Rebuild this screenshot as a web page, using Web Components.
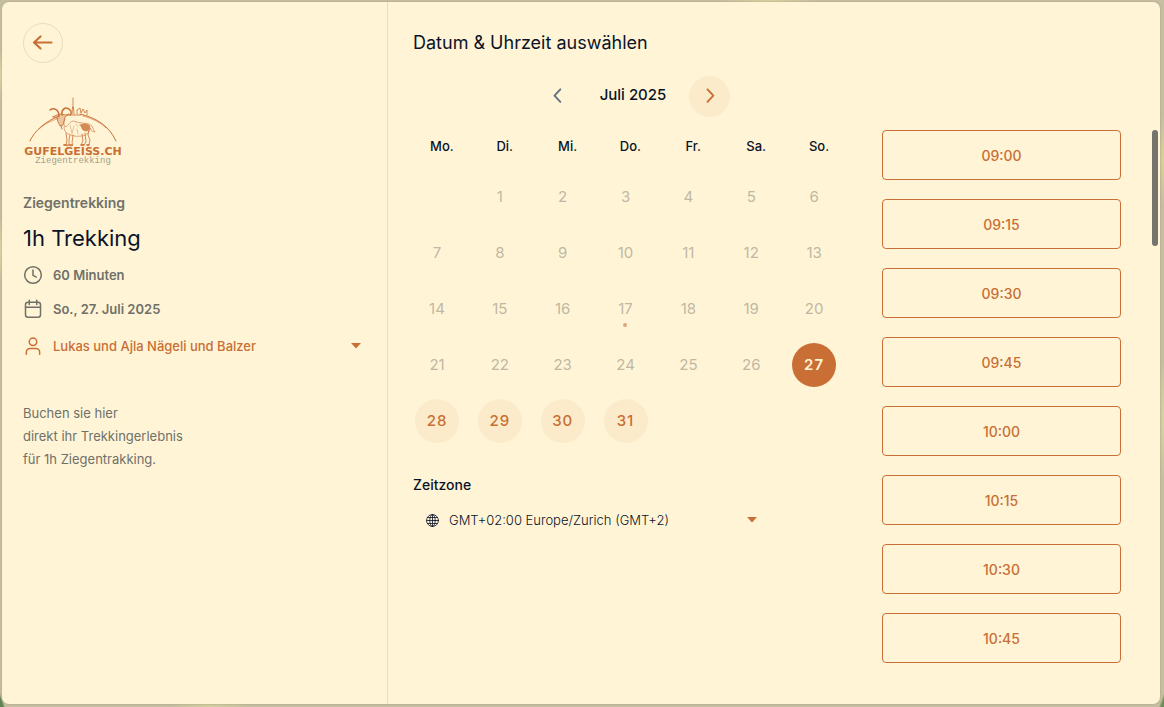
<!DOCTYPE html>
<html lang="de">
<head>
<meta charset="utf-8">
<meta name="viewport" content="width=device-width, initial-scale=1">
<title>1h Trekking</title>
<style>
	:root {
		--paper: #fff5d6;
		--accent: #c96f35;
		--tint: #fbebca;
		--ink: #0b1328;
		--muted: #707069;
		--line: #e6dcc1;
	}
	* { box-sizing: border-box; }
	body {
		margin: 0;
		min-height: 100vh;
		padding: 2px 4px 3px 2px;
		display: flex;
		font-family: Inter, "Liberation Sans", sans-serif;
		font-size: 14px;
		color: var(--ink);
		background:
			linear-gradient(70deg, #5f8350 3px, transparent 5px) 0 100% / 8px 14px no-repeat,
			linear-gradient(290deg, #6e8f5b 3px, transparent 5px) 100% 100% / 8px 22px no-repeat,
			radial-gradient(ellipse 6px 26px at 0 75px, #dcd8a0, transparent),
			radial-gradient(ellipse 6px 34px at 0 250px, #dcd8a0, transparent),
			radial-gradient(ellipse 6px 44px at 100% 160px, #d8d49a, transparent),
			radial-gradient(ellipse 6px 60px at 100% 420px, #dad6a0, transparent),
			radial-gradient(ellipse 40px 6px at 18% 100%, #d5d1a0, transparent),
			radial-gradient(ellipse 50px 6px at 66% 0, #d8d49e, transparent),
			#c6bea1;
	}
</style>
</head>
<body>
<booking-card>
	<booking-summary slot="summary" category="Ziegentrekking" heading="1h Trekking">
		<meta-line icon="clock">60 Minuten</meta-line>
		<meta-line icon="calendar">So., 27. Juli 2025</meta-line>
		<staff-select></staff-select>
		<span slot="description">Buchen sie hier<br>direkt ihr Trekkingerlebnis<br>für 1h Ziegentrakking.</span>
	</booking-summary>
	<span slot="title">Datum &amp; Uhrzeit auswählen</span>
	<month-calendar slot="calendar" label="Juli 2025" offset="1" days="31" today="17" selected="27"></month-calendar>
	<zone-select slot="calendar"></zone-select>
	<time-slots slot="times" start="09:00" count="8" step="15"></time-slots>
</booking-card>

<script>
const ICONS = {
	back: '<path d="M20.5 11.500H3.5M9.5 5.5 3 11.500l6.5 6" stroke-width="2.200"/>',
	prev: '<path d="m16 4-7 7.500 7 7.500" stroke-width="2.300"/>',
	next: '<path d="m9 4 7 7.500-7 7.500" stroke-width="2.300"/>',
	clock: '<circle cx="12" cy="12" r="10"/><path d="M12 6v6.5l4 2"/>',
	calendar: '<rect x="3" y="4" width="18" height="18" rx="3"/><path d="M3 10h18M7.5 1.5v5M16.5 1.5v5"/>',
	user: '<circle cx="12" cy="7" r="4.5"/><path d="M4 22v-2.500a4.500 4.500 0 0 1 4.500-4.500h7a4.500 4.500 0 0 1 4.500 4.500V22"/>',
	globe: '<g stroke-width="1.500"><circle cx="12" cy="12" r="11"/><ellipse cx="12" cy="12" rx="5" ry="11"/><path d="M12 1v22M1 12h22M3 6.500h18M3 17.500h18"/></g>',
	caret: '<path d="M2 6h20L12 17z" fill="currentColor" stroke="none"/>'
};

class UiIcon extends HTMLElement {
	connectedCallback() {
		this.attachShadow({ mode: 'open' });
		this.shadowRoot.innerHTML = `
			<style>
				:host { display: inline-flex; flex: none; width: 20px; height: 20px; }
				svg { width: 100%; height: 100%; }
			</style>
			<svg viewBox="0 0 24 24" fill="none" stroke="currentColor" stroke-width="1.8"
				stroke-linecap="round" stroke-linejoin="round" aria-hidden="true">${ICONS[this.getAttribute('name')]}</svg>
		`;
	}
}

class BookingCard extends HTMLElement {
	constructor() {
		super();
		this.attachShadow({ mode: 'open' });
		this.shadowRoot.innerHTML = `
			<style>
				* { box-sizing: border-box; }
				:host {
					flex: 1;
					display: grid;
					grid-template-columns: 1fr 2fr;
					background: var(--paper);
					border-radius: 7px;
					box-shadow: 0 0 1px 1px rgba(150, 140, 110, .2);
				}
				aside { border-right: 1px solid var(--line); padding: 21px; }
				main { padding: 28px 2px 0 25px; }
				h1 { margin: 0 0 20px; font-size: 18px; line-height: 26px; font-weight: 400; }
				.columns { display: flex; }
				.left { flex: 440 1 0; margin-right: 29px; }
				.right { flex: 276 1 0; padding-top: 54px; }
			</style>
			<aside><slot name="summary"></slot></aside>
			<main>
				<h1><slot name="title"></slot></h1>
				<div class="columns">
					<div class="left"><slot name="calendar"></slot></div>
					<div class="right"><slot name="times"></slot></div>
				</div>
			</main>
		`;
	}
}

class BrandLogo extends HTMLElement {
	constructor() {
		super();
		this.attachShadow({ mode: 'open' });
		this.shadowRoot.innerHTML = `
			<style>
				:host { display: block; width: 100px; height: 70px; color: var(--accent); }
				svg { display: block; overflow: visible; }
				.name { font: 700 11px "DejaVu Sans", sans-serif; }
				.sub { font: 9px "Liberation Mono", monospace; fill: #a59f8c; }
			</style>
			<svg width="100" height="70" viewBox="0 0 100 70" fill="none" stroke="currentColor" stroke-linecap="round" stroke-linejoin="round">
				<!-- hill line -->
				<path d="M7 44C11 34 23 24 36 19M57 17c17 4 29 12 36 27" stroke-width="1"/>
				<path d="M16 32c5-5 12-8 20-11M60 19c11 3 18 7 23 12" stroke-width=".6"/>
				<!-- tower and village -->
				<path d="M50 1v10M49 17l.5-7h1l.5 7M44 18h14M54 17v-4l3-2 1 5 2-4 2 4 2-3v5" stroke-width=".8"/>
				<g transform="translate(0 -1)">
					<!-- horns and head -->
					<path d="M36 20c0-6-5-9-9-6M39 19c-1-6 4-9 8-5 2 2 1 4 0 5" stroke-width="1.500"/>
					<path d="M34 19l4-1 5 1 3-1-4 3-2 8-3 1-2-4-1-4-4-1z" fill="currentColor" fill-opacity=".35" stroke-width=".8"/>
					<path d="M38 30l1 3" stroke-width="1"/>
					<!-- body and legs -->
					<path d="M42 23c-1 3-2 6 1 8 4-4 4-5 7-6 6 2 10 2 16 3 4 1 3 4 6 8l-3-1-2-3c0 5-5 8-9 8-7 1-9-1-13-2-3-2-4-4-4-8" stroke-width=".6"/>
					<path d="M57 29c4-2 8-1 10 1 0 5-4 6-7 4-2-2-1-4-3-5z" fill="currentColor" fill-opacity=".8" stroke-width=".5"/>
					<path d="M43 37l1 7-1 5h-2M47 39l-1 5v5l-2 1M50 39l-1 8 1 2-2 1M59 38l1 7-2 4M62 37l1 9-2 3h-2M66 34l-1 5 2 5-1 5h-2" stroke-width=".8"/>
					<path d="M47 29l2 8M51 30l-2 7M54 33l1 5M53 28l2 3" stroke-width=".4"/>
					<path d="M41 49h3M46 49h3M58 49h3M64 49h2" stroke-width="1.400"/>
				</g>
				<g fill="currentColor" stroke="none">
					<text class="name" x="50" y="58" text-anchor="middle">GUFELGEISS.CH</text>
					<text class="sub" x="50" y="66" text-anchor="middle">Ziegentrekking</text>
				</g>
			</svg>
		`;
	}
}

class BookingSummary extends HTMLElement {
	connectedCallback() {
		this.attachShadow({ mode: 'open' });
		this.shadowRoot.innerHTML = `
			<style>
				:host { display: block; }
				button {
					display: flex;
					align-items: center;
					justify-content: center;
					width: 40px;
					height: 40px;
					padding: 0;
					border: 1px solid var(--line);
					border-radius: 50%;
					background: none;
					color: var(--accent);
				}
				button ui-icon { width: 24px; height: 24px; }
				brand-logo { margin-top: 34px; }
				.category { margin: 26px 0 0; line-height: 20px; font-weight: 600; color: var(--muted); }
				h2 { margin: 9px 0 11px; font-size: 22px; line-height: 32px; font-weight: 400; }
				.meta { display: grid; gap: 14px; }
				.description { margin: 43px 0 0; font-size: 13px; line-height: 23px; color: var(--muted); }
			</style>
			<button type="button" aria-label="Zurück"><ui-icon name="back"></ui-icon></button>
			<brand-logo></brand-logo>
			<p class="category">${this.getAttribute('category')}</p>
			<h2>${this.getAttribute('heading')}</h2>
			<div class="meta"><slot></slot></div>
			<p class="description"><slot name="description"></slot></p>
		`;
	}
}

class MetaLine extends HTMLElement {
	connectedCallback() {
		this.attachShadow({ mode: 'open' });
		this.shadowRoot.innerHTML = `
			<style>
				:host {
					display: flex;
					align-items: center;
					gap: 10px;
					font-size: 13px;
					line-height: 20px;
					font-weight: 600;
					color: var(--muted);
				}
			</style>
			<ui-icon name="${this.getAttribute('icon')}"></ui-icon>
			<span><slot></slot></span>
		`;
	}
}

// shared by both drop-downs: icon, bare select, caret
const SELECT_STYLE = `
	.field { display: flex; align-items: center; gap: 10px; }
	select {
		flex: 1;
		min-width: 0;
		height: 26px;
		padding: 0;
		border: 0;
		appearance: none;
		background: none;
		color: inherit;
		font: inherit;
	}
	.caret { width: 12px; height: 12px; color: var(--accent); }
`;

class StaffSelect extends HTMLElement {
	constructor() {
		super();
		this.attachShadow({ mode: 'open' });
		this.shadowRoot.innerHTML = `
			<style>
				:host { display: block; font-size: 13px; font-weight: 500; color: var(--accent); }
				${SELECT_STYLE}
				.field { padding-right: 4px; }
			</style>
			<div class="field">
				<ui-icon name="user"></ui-icon>
				<select aria-label="Mitarbeiter"><option>Lukas und Ajla Nägeli und Balzer</option></select>
				<ui-icon class="caret" name="caret"></ui-icon>
			</div>
		`;
	}
}

class ZoneSelect extends HTMLElement {
	constructor() {
		super();
		this.attachShadow({ mode: 'open' });
		this.shadowRoot.innerHTML = `
			<style>
				:host { display: block; margin-top: 26px; }
				label { display: block; line-height: 20px; font-weight: 500; }
				${SELECT_STYLE}
				.field { width: 332px; margin-top: 12px; padding-left: 13px; font-size: 13px; font-weight: 300; }
				.globe { width: 13px; height: 13px; }
			</style>
			<label for="zone">Zeitzone</label>
			<div class="field">
				<ui-icon class="globe" name="globe"></ui-icon>
				<select id="zone"><option>GMT+02:00 Europe/Zurich (GMT+2)</option></select>
				<ui-icon class="caret" name="caret"></ui-icon>
			</div>
		`;
	}
}

class MonthCalendar extends HTMLElement {
	connectedCallback() {
		this.offset = Number(this.getAttribute('offset'));
		this.days = Number(this.getAttribute('days'));
		this.today = Number(this.getAttribute('today'));
		this.selected = Number(this.getAttribute('selected'));
		this.attachShadow({ mode: 'open' });
		this.shadowRoot.innerHTML = `
			<style>
				:host { display: block; }
				nav { display: flex; align-items: center; justify-content: center; }
				nav button { width: 41px; height: 41px; }
				nav ui-icon { width: 20px; height: 20px; }
				nav span { width: 112px; padding-bottom: 4px; text-align: center; font-size: 15px; line-height: 20px; font-weight: 500; }
				.prev { background: none; color: #667085; }
				table { width: 100%; table-layout: fixed; border-collapse: collapse; margin-top: 20px; }
				th { padding: 0 5px 2px 0; height: 18px; font-size: 13px; line-height: 18px; font-weight: 500; }
				td { padding: 0 0 0 2px; height: 56px; }
				thead::after { content: ""; display: block; height: 12px; }
				button {
					display: flex;
					align-items: center;
					justify-content: center;
					box-sizing: border-box;
					position: relative;
					width: 44px;
					height: 44px;
					padding: 0 0 2px;
					border: 0;
					border-radius: 50%;
					background: var(--tint);
					color: var(--accent);
					font: 500 15px Inter, sans-serif;
					letter-spacing: 1px;
				}
				button:disabled { background: none; color: #bfb8a4; font-weight: 400; letter-spacing: 0; }
				.selected { background: var(--accent); color: var(--paper); font-weight: 600; }
				.today::after {
					content: "";
					position: absolute;
					left: 19px;
					bottom: 4px;
					width: 4px;
					height: 4px;
					border-radius: 50%;
					background: #dfa67c;
				}
			</style>
			<nav>
				<button class="prev" type="button" aria-label="Vorheriger Monat"><ui-icon name="prev"></ui-icon></button>
				<span>${this.getAttribute('label')}</span>
				<button type="button" aria-label="Nächster Monat"><ui-icon name="next"></ui-icon></button>
			</nav>
			<table>
				<thead><tr>${['Mo.', 'Di.', 'Mi.', 'Do.', 'Fr.', 'Sa.', 'So.'].map(d => `<th>${d}</th>`).join('')}</tr></thead>
				<tbody>${this.weeks()}</tbody>
			</table>
		`;
	}

	weeks() {
		let html = '';
		for(let first = 1 - this.offset;first <= this.days;first += 7) {
			html += '<tr>';
			for(let day = first;day < first + 7;day++) {
				html += `<td>${day > 0 && day <= this.days ? this.day(day) : ''}</td>`;
			}
			html += '</tr>';
		}
		return html;
	}

	day(n) {
		const state = n === this.selected ? 'selected' : n === this.today ? 'today' : '';
		return `<button type="button" class="${state}" ${n < this.selected ? 'disabled' : ''}>${n}</button>`;
	}
}

class TimeSlots extends HTMLElement {
	connectedCallback() {
		const [h, m] = this.getAttribute('start').split(':').map(Number);
		const step = Number(this.getAttribute('step'));
		let buttons = '';
		for(let i = 0;i < Number(this.getAttribute('count'));i++) {
			const t = h * 60 + m + i * step;
			const label = String(Math.floor(t / 60)).padStart(2, '0') + ':' + String(t % 60).padStart(2, '0');
			buttons += `<button type="button">${label}</button>`;
		}
		this.attachShadow({ mode: 'open' });
		this.shadowRoot.innerHTML = `
			<style>
				:host { display: flex; gap: 31px; }
				.list { flex: 1; display: grid; gap: 19px; }
				button {
					height: 50px;
					padding: 0;
					border: 1px solid var(--accent);
					border-radius: 4px;
					background: none;
					color: var(--accent);
					font: 500 14px Inter, sans-serif;
				}
				.thumb { width: 6px; height: 116px; border-radius: 3px; background: #74746c; }
			</style>
			<div class="list">${buttons}</div>
			<div class="thumb"></div>
		`;
	}
}

customElements.define('ui-icon', UiIcon);
customElements.define('booking-card', BookingCard);
customElements.define('brand-logo', BrandLogo);
customElements.define('booking-summary', BookingSummary);
customElements.define('meta-line', MetaLine);
customElements.define('staff-select', StaffSelect);
customElements.define('zone-select', ZoneSelect);
customElements.define('month-calendar', MonthCalendar);
customElements.define('time-slots', TimeSlots);
</script>
</body>
</html>
